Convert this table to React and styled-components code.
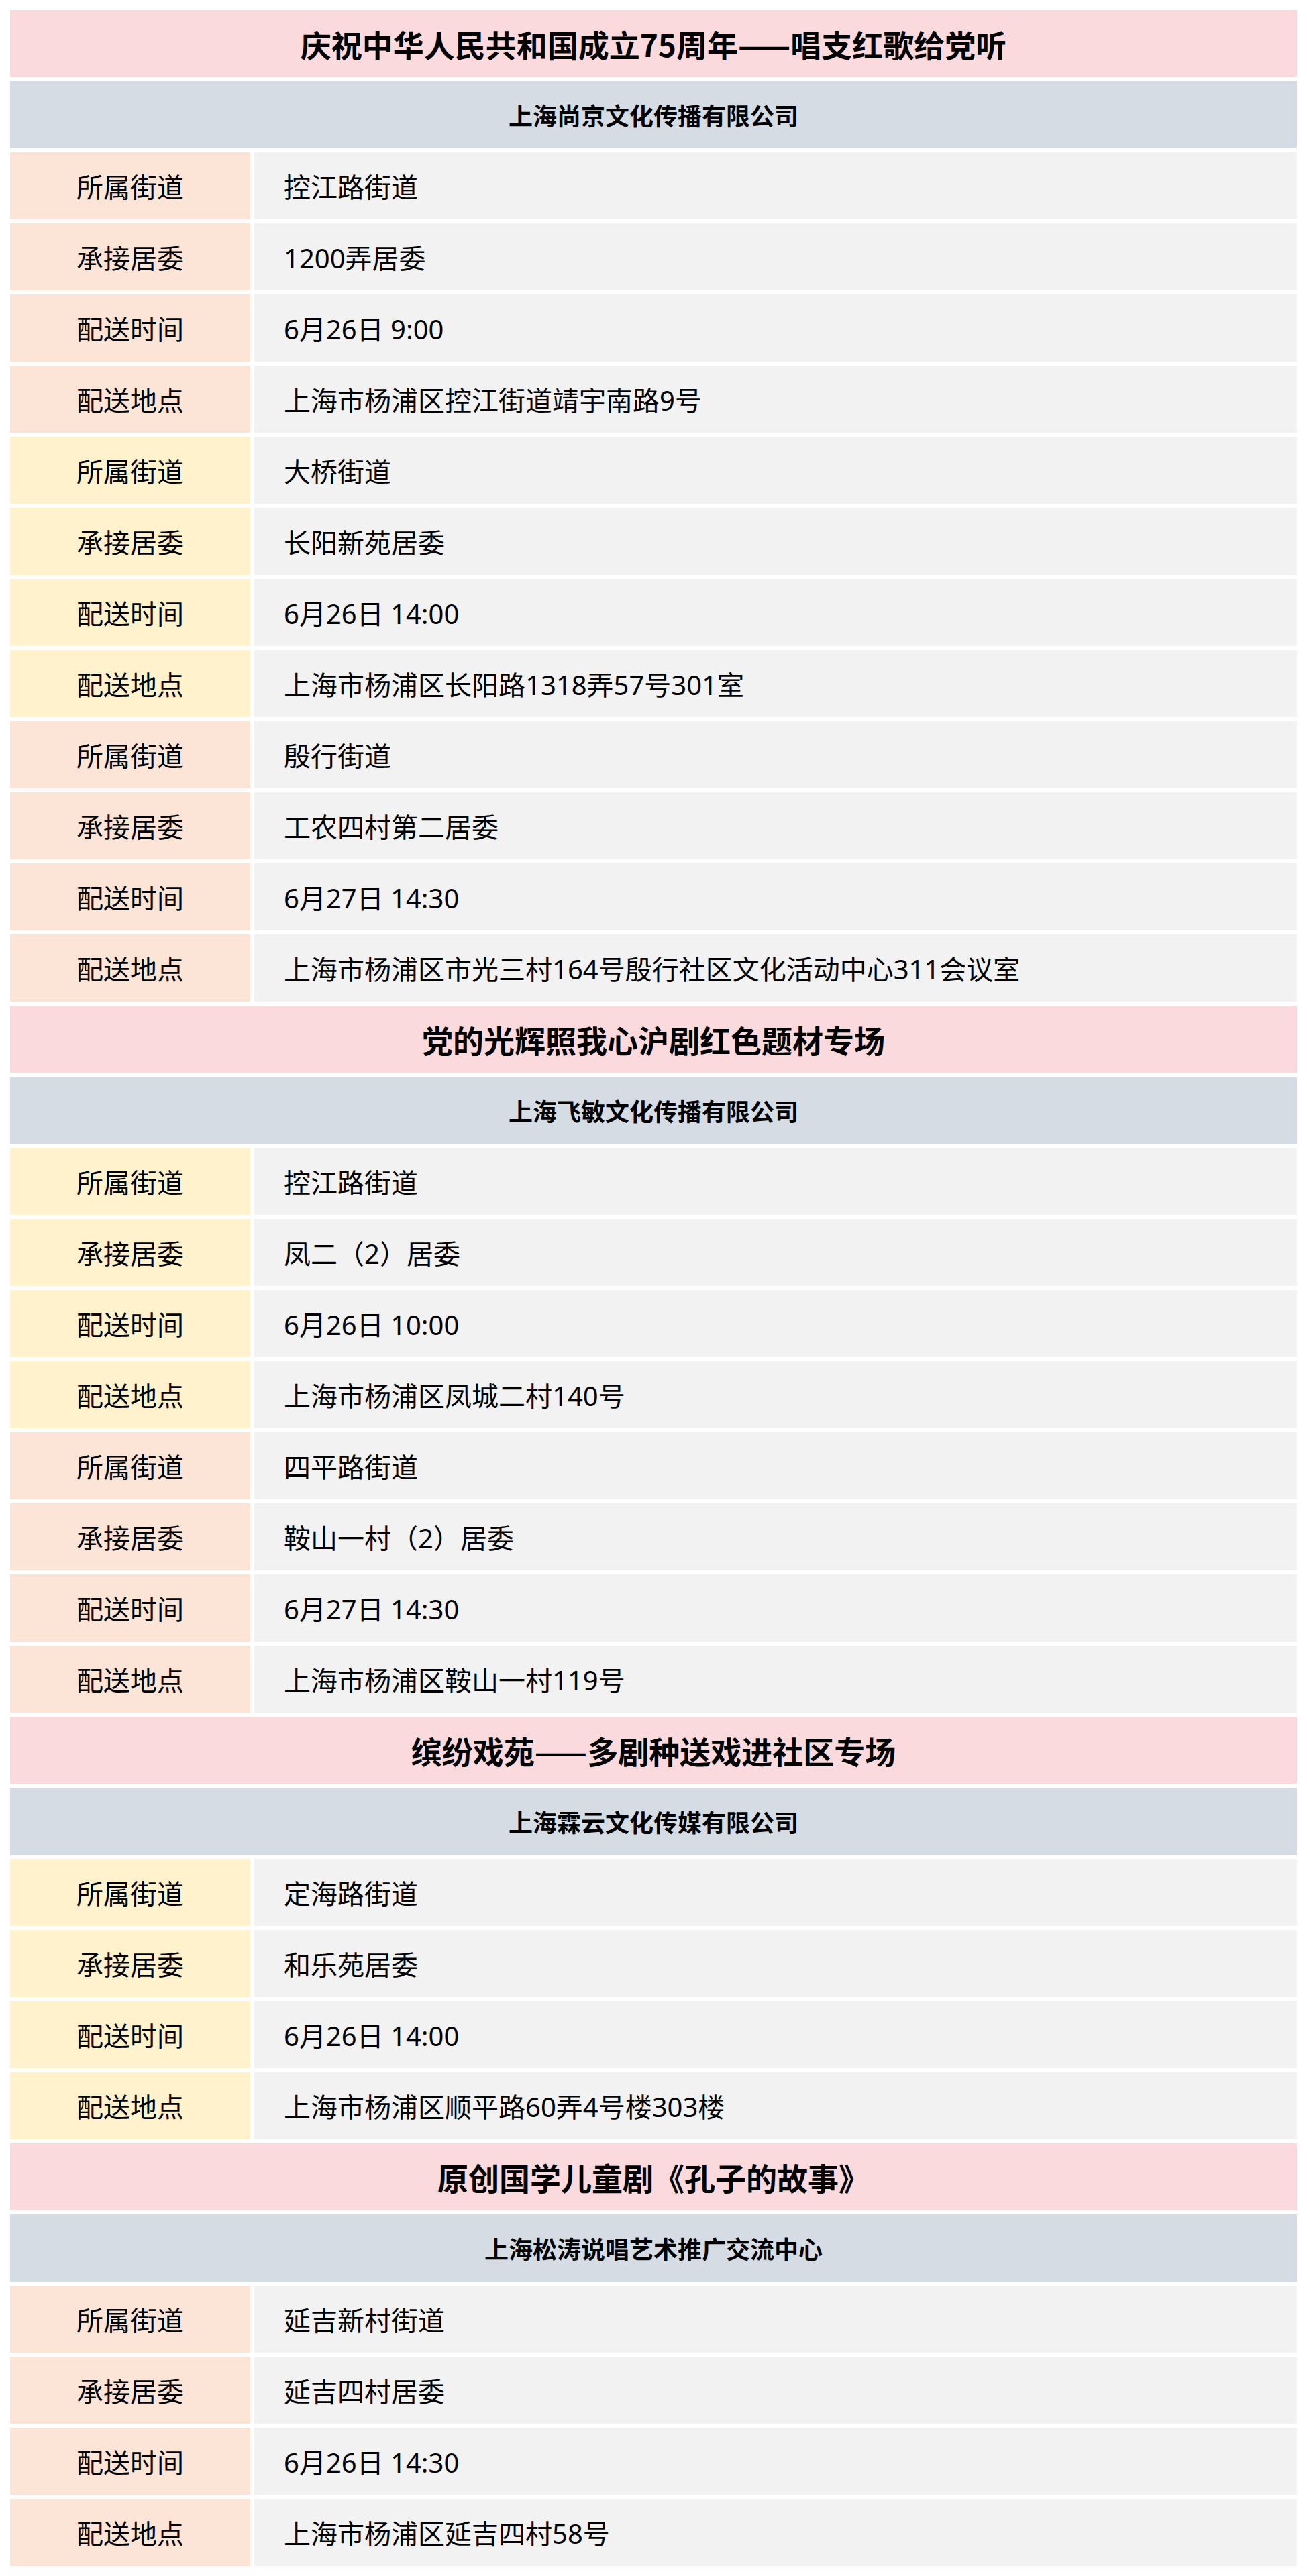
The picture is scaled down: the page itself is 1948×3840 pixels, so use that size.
import React from 'react';
import styled, { createGlobalStyle } from 'styled-components';

const GlobalStyle = createGlobalStyle`
  html, body {
    margin: 0;
    padding: 0;
    background: #ffffff;
  }
  body {
    font-family: 'Noto Sans', 'Noto Sans CJK SC', sans-serif;
    color: #000000;
  }
`;

const LABEL_COLORS = ['#fce4d6', '#fff2cc'];

const programs = [
  {
    title: '庆祝中华人民共和国成立75周年——唱支红歌给党听',
    company: '上海尚京文化传播有限公司',
    stops: [
      { street: '控江路街道', committee: '1200弄居委', time: '6月26日 9:00', place: '上海市杨浦区控江街道靖宇南路9号' },
      { street: '大桥街道', committee: '长阳新苑居委', time: '6月26日 14:00', place: '上海市杨浦区长阳路1318弄57号301室' },
      { street: '殷行街道', committee: '工农四村第二居委', time: '6月27日 14:30', place: '上海市杨浦区市光三村164号殷行社区文化活动中心311会议室' },
    ],
  },
  {
    title: '党的光辉照我心沪剧红色题材专场',
    company: '上海飞敏文化传播有限公司',
    stops: [
      { street: '控江路街道', committee: '凤二（2）居委', time: '6月26日 10:00', place: '上海市杨浦区凤城二村140号' },
      { street: '四平路街道', committee: '鞍山一村（2）居委', time: '6月27日 14:30', place: '上海市杨浦区鞍山一村119号' },
    ],
  },
  {
    title: '缤纷戏苑——多剧种送戏进社区专场',
    company: '上海霖云文化传媒有限公司',
    stops: [
      { street: '定海路街道', committee: '和乐苑居委', time: '6月26日 14:00', place: '上海市杨浦区顺平路60弄4号楼303楼' },
    ],
  },
  {
    title: '原创国学儿童剧《孔子的故事》',
    company: '上海松涛说唱艺术推广交流中心',
    stops: [
      { street: '延吉新村街道', committee: '延吉四村居委', time: '6月26日 14:30', place: '上海市杨浦区延吉四村58号' },
    ],
  },
];

const Page = styled.div`
  padding: 15px;
  display: flex;
  flex-direction: column;
  gap: 6px;
`;

const TitleRow = styled.div`
  height: 100px;
  background: #fadadd;
  display: flex;
  align-items: center;
  justify-content: center;
  font-family: 'Noto Sans CJK SC', 'Noto Sans', sans-serif;
  font-size: 46px;
  font-weight: 700;
`;

const CompanyRow = styled.div`
  height: 100px;
  background: #d6dce4;
  display: flex;
  align-items: center;
  justify-content: center;
  font-size: 36px;
  font-weight: 700;
`;

const InfoRow = styled.div`
  display: grid;
  grid-template-columns: 358px 1fr;
  gap: 6px;
  height: 100px;
`;

const Label = styled.div`
  background: ${(p) => p.tone};
  display: flex;
  align-items: center;
  justify-content: center;
  font-size: 40px;
`;

const Value = styled.div`
  background: #f2f2f2;
  display: flex;
  align-items: center;
  padding-left: 44px;
  font-size: 40px;
  white-space: nowrap;
`;

const App = () => {
  let group = 0;

  return (
    <>
      <GlobalStyle />
      <Page>
        {programs.map((program) => (
          <React.Fragment key={program.title}>
            <TitleRow>{program.title}</TitleRow>
            <CompanyRow>{program.company}</CompanyRow>
            {program.stops.map((stop) => {
              const tone = LABEL_COLORS[group % 2];
              group += 1;
              const fields = [
                ['所属街道', stop.street],
                ['承接居委', stop.committee],
                ['配送时间', stop.time],
                ['配送地点', stop.place],
              ];
              return fields.map(([label, value]) => (
                <InfoRow key={stop.street + label}>
                  <Label tone={tone}>{label}</Label>
                  <Value>{value}</Value>
                </InfoRow>
              ));
            })}
          </React.Fragment>
        ))}
      </Page>
    </>
  );
};

export default App;
